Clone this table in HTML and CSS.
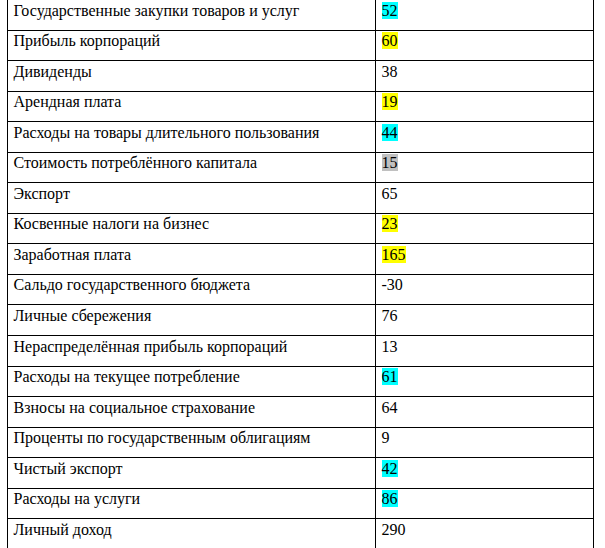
FILE: index.html
```html
<!DOCTYPE html>
<html lang="ru">
<head>
<meta charset="utf-8">
<link rel="stylesheet" href="styles.css">
</head>
<body>
<table class="data">
<colgroup><col class="c1"><col class="c2"></colgroup>
<tbody>
<tr><td>Государственные закупки товаров и услуг</td><td><span class="hl-cyan">52</span></td></tr>
<tr><td>Прибыль корпораций</td><td><span class="hl-yellow">60</span></td></tr>
<tr><td>Дивиденды</td><td>38</td></tr>
<tr><td>Арендная плата</td><td><span class="hl-yellow">19</span></td></tr>
<tr><td>Расходы на товары длительного пользования</td><td><span class="hl-cyan">44</span></td></tr>
<tr><td>Стоимость потреблённого капитала</td><td><span class="hl-gray">15</span></td></tr>
<tr><td>Экспорт</td><td>65</td></tr>
<tr><td>Косвенные налоги на бизнес</td><td><span class="hl-yellow">23</span></td></tr>
<tr><td>Заработная плата</td><td><span class="hl-yellow">165</span></td></tr>
<tr><td>Сальдо государственного бюджета</td><td>-30</td></tr>
<tr><td>Личные сбережения</td><td>76</td></tr>
<tr><td>Нераспределённая прибыль корпораций</td><td>13</td></tr>
<tr><td>Расходы на текущее потребление</td><td><span class="hl-cyan">61</span></td></tr>
<tr><td>Взносы на социальное страхование</td><td>64</td></tr>
<tr><td>Проценты по государственным облигациям</td><td>9</td></tr>
<tr><td>Чистый экспорт</td><td><span class="hl-cyan">42</span></td></tr>
<tr><td>Расходы на услуги</td><td><span class="hl-cyan">86</span></td></tr>
<tr><td>Личный доход</td><td>290</td></tr>
</tbody>
</table>
</body>
</html>
```
FILE: styles.css
```css
html, body {
  margin: 0;
  padding: 0;
  background: #ffffff;
}
body {
  overflow: hidden;
}
.data {
  border-collapse: collapse;
  table-layout: fixed;
  width: 586px;
  margin: -1px 0 0 6.5px;
  font-family: "Liberation Serif", "Times New Roman", serif;
  font-size: 16px;
  color: #000000;
}
.c1 { width: 368px; }
.c2 { width: 218px; }
.data td {
  border: 1px solid #000000;
  padding: 1.5px 6px 0 6px;
  height: 30.56px;
  box-sizing: border-box;
  vertical-align: top;
  line-height: 18px;
  white-space: nowrap;
}
.hl-cyan { background: #00ffff; }
.hl-yellow { background: #ffff00; }
.hl-gray { background: #c0c0c0; }
```
